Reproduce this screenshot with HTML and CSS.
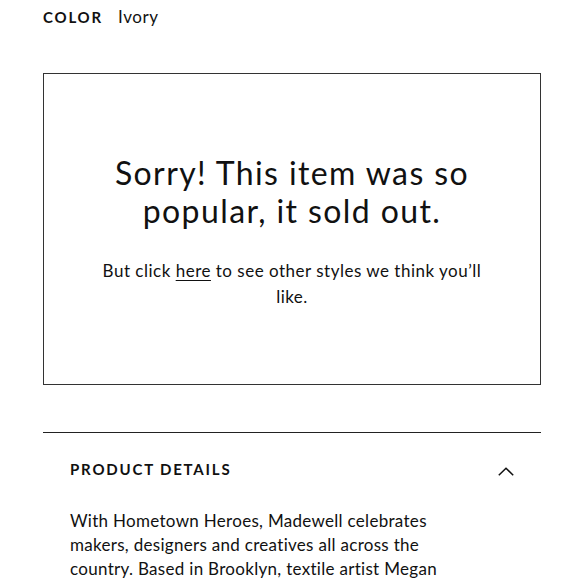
FILE: index.html
```html
<!DOCTYPE html>
<html>
<head>
<meta charset="utf-8">
<link rel="stylesheet" href="styles.css">
</head>
<body>
<div class="page">
  <div class="color-row">
    <span class="color-label">COLOR</span>
    <span class="color-value">Ivory</span>
  </div>
  <div class="soldout">
    <h2 class="soldout-title">Sorry! This item was so popular, it sold out.</h2>
    <p class="soldout-text">But click <a href="#" class="link">here</a> to see other styles we think you’ll like.</p>
  </div>
  <div class="details">
    <div class="details-head">
      <span class="details-title">PRODUCT DETAILS</span>
      <svg class="chevron" width="16" height="9" viewBox="0 0 16 9"><path d="M0.8 8.2 L8 1.2 L15.2 8.2" fill="none" stroke="#111" stroke-width="1.5"/></svg>
    </div>
    <p class="details-text">With Hometown Heroes, Madewell celebrates makers, designers and creatives all across the country. Based in Brooklyn, textile artist Megan</p>
  </div>
</div>
</body>
</html>
```
FILE: styles.css
```css
html, body {
  margin: 0;
  padding: 0;
  background: #fff;
}
body {
  font-family: Lato, "Noto Sans", sans-serif;
  color: #111;
}
.page {
  width: 498px;
  margin-left: 43px;
}
.color-row {
  display: flex;
  align-items: baseline;
  gap: 15px;
  padding-top: 7px;
  height: 20px;
  line-height: 20px;
}
.color-label {
  font-weight: 700;
  font-size: 15px;
  letter-spacing: 1.8px;
}
.color-value {
  font-size: 17px;
  letter-spacing: 0.6px;
}
.soldout {
  margin-top: 46px;
  border: 1px solid #333;
  box-sizing: border-box;
  height: 312px;
  padding-top: 80px;
  display: flex;
  flex-direction: column;
  align-items: center;
  text-align: center;
}
.soldout-title {
  margin: 0;
  font-weight: 400;
  font-size: 32px;
  line-height: 38px;
  letter-spacing: 1.4px;
  width: 400px;
}
.soldout-text {
  margin: 28px 0 0;
  font-size: 17px;
  line-height: 26px;
  letter-spacing: 0.5px;
  width: 400px;
}
.link {
  color: inherit;
  text-decoration: underline;
  text-decoration-thickness: 1px;
  text-underline-offset: 3px;
}
.details {
  margin-top: 47px;
  border-top: 1px solid #222;
  padding: 0 27px;
}
.details-head {
  display: flex;
  justify-content: space-between;
  align-items: flex-start;
  padding-top: 26px;
  height: 20px;
  line-height: 20px;
}
.details-title {
  font-weight: 700;
  font-size: 15px;
  letter-spacing: 1.8px;
}
.chevron {
  display: block;
  margin-top: 8px;
  margin-right: 0;
}
.details-text {
  margin: 30px 0 0;
  font-size: 17px;
  line-height: 24px;
  letter-spacing: 0.3px;
  width: 375px;
}
```
